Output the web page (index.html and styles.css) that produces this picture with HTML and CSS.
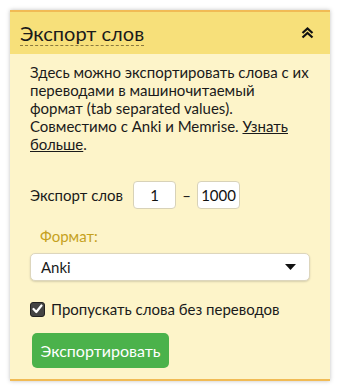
FILE: index.html
```html
<!DOCTYPE html>
<html lang="ru">
<head>
    <meta charset="UTF-8">
    <meta name="viewport" content="width=device-width, initial-scale=1.0">
    <title>Экспорт слов</title>
    <link rel="stylesheet" href="styles.css">
</head>
<body>

    <div class="panel">
        <div class="panel-head">
            <span class="panel-title">Экспорт слов</span>
            <svg class="collapse" width="13" height="12" viewBox="0 0 13 12">
                <path d="M1.5 6 L6.5 1.5 L11.5 6 M1.5 10.5 L6.5 6 L11.5 10.5" fill="none" stroke="#111" stroke-width="2.2"/>
            </svg>
        </div>

        <div class="panel-body">
            <p class="desc">Здесь можно экспортировать слова с их переводами в машиночитаемый формат (tab separated values). Совместимо с Anki и Memrise. <a href="#">Узнать больше</a>.</p>

            <div class="range-row">
                <span>Экспорт слов</span>
                <input class="num-input" type="text" value="1">
                <span class="dash">–</span>
                <input class="num-input" type="text" value="1000">
            </div>

            <label class="field-label">Формат:</label>
            <div class="select-box">
                <span>Anki</span>
                <svg width="11" height="6" viewBox="0 0 11 6"><path d="M0 0 H11 L5.5 6 Z" fill="#111"/></svg>
            </div>

            <label class="check-row">
                <span class="check-box">
                    <svg width="11" height="10" viewBox="0 0 11 10"><path d="M1.5 5 L4.3 8 L9.5 1.5" fill="none" stroke="#fff" stroke-width="2.2" stroke-linecap="round" stroke-linejoin="round"/></svg>
                </span>
                Пропускать слова без переводов
            </label>

            <button class="export-btn">Экспортировать</button>
        </div>
    </div>

</body>
</html>
```

FILE: styles.css
```css
body { margin: 0; background: #fff; font-family: Lato, "Noto Sans", sans-serif; color: #1a1a1a; }

.panel { margin: 10px; border-top: 2px solid #f1bb55; border-bottom: 2px solid #f1bb55; background: #fdf4c9; box-shadow: 0 0 4px rgba(0,0,0,0.25); height: 371px; box-sizing: border-box; }

.panel-head { background: #f7e07a; height: 42px; display: flex; align-items: center; justify-content: space-between; padding: 0 16px 0 10px; }
.panel-title { font-size: 20px; border-bottom: 1px dashed #8a7a40; line-height: 23px; margin-top: 2px; }
.collapse { margin-top: -1px; }

.panel-body { padding: 9px 20px 0 20px; font-size: 15px; }

.desc { margin: 0 0 28px; line-height: 18px; }
.desc a { color: #1a1a1a; }

/* диапазон слов */
.range-row { display: flex; align-items: center; }
.range-row span:first-child { margin-right: 10px; }
.num-input { width: 43px; height: 28px; box-sizing: border-box; border: 1px solid #d8d2b8; border-radius: 4px; background: #fff; text-align: center; font-family: inherit; font-size: 15px; padding: 0; color: #111; }
.dash { width: 21px; text-align: center; }

.field-label { display: block; color: #c6a21e; margin: 18px 0 8px 10px; font-size: 15px; }

.select-box { height: 28px; box-sizing: border-box; width: 280px; background: #fff; border: 1px solid #ddd6bd; border-radius: 5px; box-shadow: 0 1px 2px rgba(0,0,0,0.15); display: flex; align-items: center; justify-content: space-between; padding: 0 13px 0 10px; }

.check-row { display: flex; align-items: center; margin-top: 19px; }
.check-box { width: 15px; height: 15px; background: #444; border: 1px solid #222; border-radius: 3px; display: flex; align-items: center; justify-content: center; margin-right: 6px; box-sizing: border-box; }

.export-btn { margin-top: 15px; margin-left: 2px; background: #4bb24b; color: #fff; border: none; border-radius: 5px; font-family: inherit; font-size: 16px; width: 137px; height: 35px; }
```
